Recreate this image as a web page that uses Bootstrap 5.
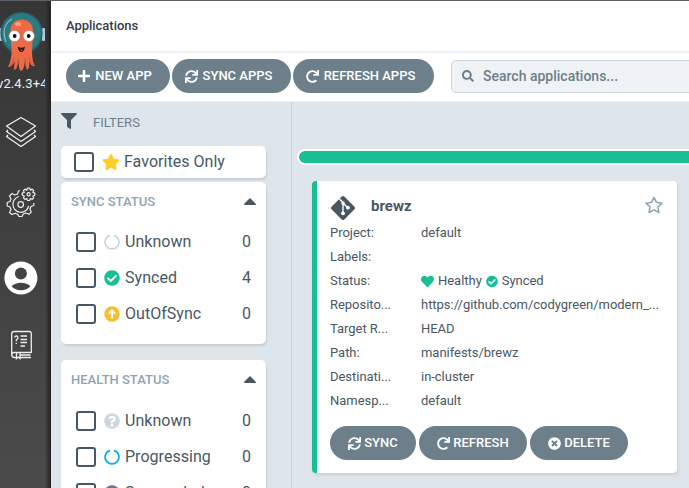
<!DOCTYPE html>
<html lang="en">
<head>
<meta charset="utf-8">
<title>Applications</title>
<link href="https://cdn.jsdelivr.net/npm/bootstrap@5.3.0/dist/css/bootstrap.min.css" rel="stylesheet">
<script src="https://cdn.jsdelivr.net/npm/bootstrap@5.3.0/dist/js/bootstrap.bundle.min.js"></script>
<style>
body{font-family:Roboto,"Liberation Sans",sans-serif;color:#495763;background:#dee6ec;height:488px;width:689px;overflow:hidden;border-top:1px solid #606067}
svg{display:block;flex:none;fill:currentColor}
.side{width:51px;flex:none;background:linear-gradient(90deg,transparent 45px,#272524 50px),linear-gradient(#363636,#4b4b4b);color:#f0f0f0;overflow:hidden}
.ver{font-size:13px;line-height:16px;width:45px;margin-top:1px;white-space:nowrap;overflow:hidden;letter-spacing:.1px;text-indent:-3px}
.i-layers{margin-top:24px}.i-gears{margin-top:39px}.i-user{margin-top:43px}.i-book{margin-top:34px}
.top-title{height:50px;font-size:13px;letter-spacing:-.03px;font-weight:500;color:#363c4a;padding-left:15px}
.tools{height:51px;border-top:2px solid #eef2f5;border-bottom:1px solid #eef2f5;padding:0 0 2px 15px;gap:2px}
.argo{background:#6d7f8b;color:#fff;height:34px;border-radius:17px;font-size:13px;font-weight:500;line-height:34px;white-space:nowrap;flex:none}
.tools .argo{padding:0 6px 0 0;gap:5px}
.acts .argo{gap:3px;padding:0}
.w-new{width:104px}.w-syncs{width:119px}.w-refs{width:141px}.w-sync{width:86px}.w-ref{width:108px}.w-del{width:98px}
.search{margin-left:15px;height:33px;width:300px;flex:none;background:#eff3f6;border:1px solid #ccd6dd;border-radius:5px;color:#6d7f8b;font-size:14px;font-weight:500;padding-left:10px;gap:9px}
.filters{width:241px;flex:none;border-right:1px solid #ccd3d8;padding:0 25px 0 10px}
.f-head{height:41px;font-size:13px;color:#6d7f8b;gap:16px}
.f-head svg{margin-top:-3px;color:#495763}
.panel{background:#fff;border-radius:5px;box-shadow:1px 2px 2px rgba(0,0,0,.1)}
.p-sync{height:162px}.p-health{height:220px}
.fav{height:32px;padding-left:13px;margin:3px 0 4px}
.p-head{height:38px;font-size:13px;font-weight:500;color:#8fa4b1;padding:1px 10px 0;margin-bottom:4px}
.p-head svg{color:#495763}
.p-health .p-head{margin-bottom:5px}
.opt{height:36px;padding:0 15px}
.opt,.fav{font-size:16px;letter-spacing:.03px}
.box{width:20px;height:20px;border:2px solid #495763;border-radius:3px;margin-right:8px;flex:none}
.opt svg,.fav svg{margin-right:5px}
.health-bar{height:16px;margin-left:5px;margin-top:47px;border:2px solid #fff;border-right:0;border-radius:8px 0 0 8px;background:#18be94;width:400px}
.app{width:365px;height:292px;margin:16px 0 0 20px;background:#fff;border-radius:4px;border-left:5px solid #18be94;padding:14px 18px 12px 13px;box-shadow:1px 2px 3px rgba(0,0,0,.1)}
.app-t{height:26px;font-size:15px}
.app-name{margin:-3px 0 0 15px}
.fav-star{fill:none;stroke:#8fa4b1;stroke-width:48;stroke-linejoin:round;margin:-7px -5px 0 0}
.line{height:24px;font-size:13px;line-height:24px;letter-spacing:-.03px}
.k{width:62px;margin-right:29px;flex:none}
.acts{gap:3px;margin-top:13px}
</style>
</head>
<body class="d-flex">
<svg width="0" height="0" class="position-absolute">
<symbol id="sync" viewBox="0 0 512 512"><path d="M440.65 12.57l4 82.77A247.16 247.16 0 0 0 255.83 8C134.73 8 33.91 94.92 12.29 209.82A12 12 0 0 0 24.09 224h49.05a12 12 0 0 0 11.67-9.26 175.91 175.91 0 0 1 317-56.94l-101.46-4.86a12 12 0 0 0-12.57 12v47.41a12 12 0 0 0 12 12H500a12 12 0 0 0 12-12V12a12 12 0 0 0-12-12h-47.37a12 12 0 0 0-11.98 12.57zM255.83 432a175.61 175.61 0 0 1-146-77.8l101.8 4.87a12 12 0 0 0 12.57-12v-47.4a12 12 0 0 0-12-12H12a12 12 0 0 0-12 12V500a12 12 0 0 0 12 12h47.35a12 12 0 0 0 12-12.6l-4.15-82.57A247.17 247.17 0 0 0 255.83 504c121.11 0 221.93-86.92 243.55-201.82a12 12 0 0 0-11.8-14.18h-49.05a12 12 0 0 0-11.67 9.26A175.86 175.86 0 0 1 255.83 432z"/></symbol>
<symbol id="redo" viewBox="0 0 512 512"><path d="M500.33 0h-47.41a12 12 0 0 0-12 12.57l4 82.76A247.42 247.42 0 0 0 256 8C119.34 8 7.9 119.53 8 256.19 8.1 393.07 119.1 504 256 504a247.1 247.1 0 0 0 166.18-63.91 12 12 0 0 0 .48-17.43l-34-34a12 12 0 0 0-16.38-.55A176 176 0 1 1 402.1 157.8l-101.53-4.87a12 12 0 0 0-12.57 12v47.41a12 12 0 0 0 12 12h200.33a12 12 0 0 0 12-12V12a12 12 0 0 0-12-12z"/></symbol>
<symbol id="check" viewBox="0 0 512 512"><path d="M504 256c0 136.967-111.033 248-248 248S8 392.967 8 256 119.033 8 256 8s248 111.033 248 248zM227.314 387.314l184-184c6.248-6.248 6.248-16.379 0-22.627l-22.627-22.627c-6.248-6.249-16.379-6.249-22.628 0L216 308.118l-70.059-70.059c-6.248-6.248-16.379-6.248-22.628 0l-22.627 22.627c-6.248 6.248-6.248 16.379 0 22.627l104 104c6.249 6.249 16.379 6.249 22.628.001z"/></symbol>
<symbol id="star" viewBox="0 0 576 512"><path d="M259.3 17.8L194 150.2 47.9 171.5c-26.2 3.8-36.7 36.1-17.7 54.6l105.7 103-25 145.5c-4.5 26.3 23.2 46 46.4 33.7L288 439.6l130.7 68.7c23.2 12.2 50.9-7.4 46.4-33.7l-25-145.5 105.7-103c19-18.5 8.5-50.8-17.7-54.6L382 150.2 316.7 17.8c-11.7-23.6-45.6-23.9-57.4 0z"/></symbol>
<symbol id="ring" viewBox="0 0 16 16"><path d="M10 1.4A6.9 6.9 0 1 1 6 1.4" fill="none" stroke="currentColor" stroke-width="1.7"/></symbol>
<symbol id="caret" viewBox="0 0 12 7"><path d="M6 0L12 6Q12 7 11 7H1Q0 7 0 6Z"/></symbol>
</svg>

<nav class="side d-flex flex-column h-100">
  <svg width="45" height="64" viewBox="0 0 45 64" style="margin-top:10px">
    <rect x="-1" y="17" width="3" height="13" rx="1" fill="#a9c8d9"/><rect x="42" y="17" width="3" height="13" rx="1" fill="#a9c8d9"/>
    <circle cx="21.5" cy="22" r="20.3" fill="#2a7b7f" stroke="#335f70" stroke-width="1.6"/>
    <path d="M6 31C2 20 5 12 12 8" fill="none" stroke="#80b8b4" stroke-width="1.4"/>
    <path d="M10.500 20C10.500 4.700 33 4.700 33 20L32 39C32 47 33 52 35 55Q31 56 29 50Q30 58 27 59Q25 54 25 49Q24 60 21 60Q18 58 19 49Q17 59 14 59Q14 54 15 50Q12 56 8 56Q12 48 11.500 39Z" fill="#ec6b46"/>
    <path d="M14 46q-1 7-4 9M18 47q0 7-2 11M25 47q0 8 2 11M29 46q1 7 4 8" fill="none" stroke="#c94f36" stroke-width=".8"/>
    <ellipse cx="18" cy="13" rx="3" ry="2" fill="#f5a080"/>
    <circle cx="14.5" cy="25" r="5.7" fill="#fff" stroke="#d9573a" stroke-width=".6"/><circle cx="28.8" cy="25" r="5.7" fill="#fff" stroke="#d9573a" stroke-width=".6"/>
    <circle cx="14.7" cy="25" r="1.9" fill="#111"/><circle cx="28.7" cy="25" r="1.9" fill="#111"/>
    <path d="M17.7 35.5Q21.5 38 25 35.5Q24 41 21.3 41T17.7 35.5Z" fill="#241a1a"/><path d="M20 39q1.5-1 3 0l-1.5 1.6Z" fill="#e33"/>
  </svg>
  <div class="ver">v2.4.3+4</div>
  <svg class="i-layers" width="42" height="32" viewBox="0 0 42 32" style="fill:none;stroke:#f2f2f2;stroke-width:1.2;stroke-linejoin:round"><path d="M21 1.5L35.5 10 21 20.5 6.5 10ZM8 14L6.5 15.500 21 25.5 35.5 15.5 34 14M8 19L6.5 20.5 21 30.5 35.5 20.5 34 19"/></svg>
  <svg class="i-gears" width="42" height="30" viewBox="0 0 42 30" style="fill:none;stroke:#eee;stroke-width:1.2;stroke-linejoin:round">
    <path d="M20 3.5L18.5 4 17.5 7 15 8 12 6.5 9.5 9 11 12 10 14.5 7.2 15.5V19L10 20 11 22.5 9.5 25.5 12 27.5 15 26.3 17.5 27.2 19 29.5H22L23.3 27 26 26 29 27.3 31.2 25 30 22 31 19.5 33.8 18.5V16"/>
    <path d="M19 9.5A8 8 0 1 0 28.7 19"/><circle cx="20.7" cy="17.5" r="2.8"/>
    <path d="M27.2 1.5h2.2l.6 2 1.9-1 1.5 1.5-.9 1.8 2 .7v2.2l-2 .7.9 1.9-1.5 1.5-1.9-.9-.6 2h-2.2l-.7-2-1.9.9-1.5-1.5.9-1.9-2-.7V6.5l2-.7-.9-1.8L24.6 2.5l1.9 1Z" transform="translate(.3 -.4)"/><circle cx="28.6" cy="7.3" r="1.6"/>
  </svg>
  <svg class="i-user" width="42" height="36" viewBox="0 0 42 36"><circle cx="20.9" cy="18" r="16.5" fill="#fff"/><circle cx="20.9" cy="13.5" r="6" fill="#434343"/><path d="M11.5 26.2C15.5 21.5 26.5 21.5 30.4 26.2C26 31.5 16 31.5 11.5 26.2Z" fill="#434343"/></svg>
  <svg class="i-book" width="42" height="30" viewBox="0 0 42 30" style="fill:none;stroke:#eee;stroke-width:1.3"><path d="M31.3 23V3.5Q31.3 1.5 29.3 1.5H14Q11.7 1.5 11.7 4V24.5Q11.7 27.5 14.5 27.5H16M31.3 22.5H14Q12 22.5 12 24.5M20 27.5H31M20 25H30.5M16.5 23V28.5L18.2 27 20 28.5V23"/><path d="M14.7 7.5Q15 5.8 16.6 6T17.8 8.5L16.3 10V11.2M16.3 12.7V14"/><path d="M20.5 6H27M20.5 9.5H27M20.5 12.5H27M20.5 16H25"/></svg>
</nav>

<main class="flex-grow-1 d-flex flex-column h-100 overflow-hidden">
  <header class="bg-white flex-shrink-0">
    <div class="top-title d-flex align-items-center">Applications</div>
    <div class="tools d-flex align-items-center">
      <button class="btn argo w-new d-flex align-items-center justify-content-center"><svg width="12" height="14" viewBox="0 0 448 512"><path d="M416 208H272V64c0-17.67-14.33-32-32-32h-32c-17.67 0-32 14.33-32 32v144H32c-17.67 0-32 14.33-32 32v32c0 17.67 14.33 32 32 32h144v144c0 17.67 14.33 32 32 32h32c17.67 0 32-14.33 32-32V304h144c17.67 0 32-14.33 32-32v-32c0-17.67-14.33-32-32-32z"/></svg>NEW APP</button>
      <button class="btn argo w-syncs d-flex align-items-center justify-content-center"><svg width="13" height="13"><use href="#sync"/></svg>SYNC APPS</button>
      <button class="btn argo w-refs d-flex align-items-center justify-content-center"><svg width="13" height="13"><use href="#redo"/></svg>REFRESH APPS</button>
      <div class="search d-flex align-items-center"><svg width="12" height="12" viewBox="0 0 512 512"><path d="M505 442.7L405.3 343c-4.5-4.5-10.6-7-17-7H372c27.6-35.3 44-79.7 44-128C416 93.1 322.9 0 208 0S0 93.1 0 208s93.1 208 208 208c48.3 0 92.7-16.4 128-44v16.3c0 6.4 2.5 12.5 7 17l99.7 99.7c9.4 9.4 24.6 9.4 33.9 0l28.3-28.3c9.4-9.4 9.4-24.6.1-34zM208 336c-70.7 0-128-57.2-128-128 0-70.7 57.2-128 128-128 70.7 0 128 57.2 128 128 0 70.7-57.2 128-128 128z"/></svg>Search applications...</div>
    </div>
  </header>
  <div class="d-flex flex-grow-1" style="min-height:0">
    <aside class="filters">
      <div class="f-head d-flex align-items-center"><svg width="16" height="16" viewBox="0 0 512 512"><path d="M487.976 0H24.028C2.71 0-8.047 25.866 7.058 40.971L192 225.941V432c0 7.831 3.821 15.17 10.237 19.662l80 55.98C298.02 518.69 320 507.493 320 487.98V225.941l184.947-184.97C520.021 25.896 509.338 0 487.976 0z"/></svg>FILTERS</div>
      <div class="panel fav d-flex align-items-center"><span class="box"></span><svg width="18" height="16" color="#ffce25"><use href="#star"/></svg><span style="margin-left:-1px">Favorites Only</span></div>
      <section class="panel p-sync">
        <div class="p-head d-flex align-items-center justify-content-between">SYNC STATUS<svg width="12" height="7"><use href="#caret"/></svg></div>
        <div class="opt d-flex align-items-center"><span class="box"></span><svg width="16" height="16" color="#ccd6dd"><use href="#ring"/></svg>Unknown<span class="ms-auto">0</span></div>
        <div class="opt d-flex align-items-center"><span class="box"></span><svg width="16" height="16" color="#18be94"><use href="#check"/></svg>Synced<span class="ms-auto">4</span></div>
        <div class="opt d-flex align-items-center"><span class="box"></span><svg width="16" height="16" viewBox="0 0 512 512" color="#f4c030"><circle cx="256" cy="256" r="248"/><path d="M256 390V150M155 245L256 145 357 245" fill="none" stroke="#fff" stroke-width="66"/></svg>OutOfSync<span class="ms-auto">0</span></div>
      </section>
      <section class="panel p-health mt-3">
        <div class="p-head d-flex align-items-center justify-content-between">HEALTH STATUS<svg width="12" height="7"><use href="#caret"/></svg></div>
        <div class="opt d-flex align-items-center"><span class="box"></span><svg width="16" height="16" viewBox="0 0 512 512" color="#ccd6dd"><path d="M504 256c0 136.997-111.043 248-248 248S8 392.997 8 256C8 119.083 119.043 8 256 8s248 111.083 248 248zM262.655 90c-54.497 0-89.255 22.957-116.549 63.758-3.536 5.286-2.353 12.415 2.715 16.258l34.699 26.31c5.205 3.947 12.621 3.008 16.665-2.122 17.864-22.658 30.113-35.797 57.303-35.797 20.429 0 45.698 13.148 45.698 32.958 0 14.976-12.363 22.667-32.534 33.976C247.128 238.528 216 254.941 216 296v4c0 6.627 5.373 12 12 12h56c6.627 0 12-5.373 12-12v-1.333c0-28.462 83.186-29.647 83.186-106.667 0-58.002-60.165-102-116.531-102zM256 338c-25.365 0-46 20.635-46 46 0 25.364 20.635 46 46 46s46-20.636 46-46c0-25.365-20.635-46-46-46z"/></svg>Unknown<span class="ms-auto">0</span></div>
        <div class="opt d-flex align-items-center"><span class="box"></span><svg width="16" height="16" color="#0dadea"><use href="#ring"/></svg>Progressing<span class="ms-auto">0</span></div>
        <div class="opt d-flex align-items-center"><span class="box"></span><svg width="16" height="16" viewBox="0 0 16 16" color="#766f94"><circle cx="8" cy="8" r="7.75"/><path d="M5 5h2v6H5zM9 5h2v6H9z" fill="#fff"/></svg>Suspended<span class="ms-auto">0</span></div>
      </section>
    </aside>
    <div class="flex-grow-1 overflow-hidden">
      <div class="health-bar"></div>
      <article class="app">
        <div class="app-t d-flex align-items-center fw-bold">
          <svg width="26" height="26" viewBox="0 0 26 26"><path d="M11.7 1.5Q13 .3 14.3 1.5L24.5 11.7Q25.7 13 24.5 14.3L14.3 24.5Q13 25.7 11.7 24.5L1.5 14.3Q.3 13 1.5 11.7Z"/><path d="M9.3 3.8L13 7.5V18M13 8L18 13" fill="none" stroke="#fff" stroke-width="1.4"/><circle cx="13" cy="8" r="1.8" fill="#fff"/><circle cx="13" cy="18.3" r="1.9" fill="#fff"/><circle cx="17.9" cy="12.7" r="1.9" fill="#fff"/></svg>
          <span class="app-name">brewz</span>
          <svg class="fav-star ms-auto" width="20" height="18" viewBox="-24 -24 624 560"><path d="M288 18L364 173 536 198 412 319 441 490 288 410 135 490 164 319 40 198 212 173Z"/></svg>
        </div>
        <div class="line d-flex"><span class="k">Project:</span><span>default</span></div>
        <div class="line d-flex"><span class="k">Labels:</span></div>
        <div class="line d-flex"><span class="k">Status:</span><span class="d-flex align-items-center"><svg width="13" height="13" viewBox="0 0 512 512" color="#18be94"><path d="M462.3 62.6C407.5 15.9 326 24.3 275.7 76.2L256 96.5l-19.7-20.3C186.1 24.3 104.5 15.9 49.7 62.6c-62.8 53.6-66.1 149.8-9.9 207.9l193.5 199.8c12.5 12.9 32.8 12.9 45.3 0l193.5-199.8c56.3-58.1 53-154.3-9.8-207.9z"/></svg><span class="ms-1 me-1">Healthy</span><svg width="12" height="13" color="#18be94"><use href="#check"/></svg><span class="ms-1">Synced</span></span></div>
        <div class="line d-flex"><span class="k">Reposito...</span><span class="text-nowrap">https://github.com/codygreen/modern_...</span></div>
        <div class="line d-flex"><span class="k">Target R...</span><span>HEAD</span></div>
        <div class="line d-flex"><span class="k">Path:</span><span>manifests/brewz</span></div>
        <div class="line d-flex"><span class="k">Destinati...</span><span>in-cluster</span></div>
        <div class="line d-flex"><span class="k">Namesp...</span><span>default</span></div>
        <div class="acts d-flex">
          <button class="btn argo w-sync d-flex align-items-center justify-content-center"><svg width="13" height="13"><use href="#sync"/></svg>SYNC</button>
          <button class="btn argo w-ref d-flex align-items-center justify-content-center"><svg width="13" height="13"><use href="#redo"/></svg>REFRESH</button>
          <button class="btn argo w-del d-flex align-items-center justify-content-center"><svg width="13" height="13" viewBox="0 0 512 512"><path d="M256 8C119 8 8 119 8 256s111 248 248 248 248-111 248-248S393 8 256 8zm121.6 313.1c4.7 4.7 4.7 12.3 0 17L338 377.6c-4.7 4.7-12.3 4.7-17 0L256 312l-65.1 65.6c-4.7 4.7-12.3 4.7-17 0L134.4 338c-4.7-4.7-4.7-12.3 0-17l65.6-65-65.6-65.1c-4.7-4.7-4.7-12.3 0-17l39.6-39.6c4.7-4.7 12.3-4.7 17 0l65 65.7 65.1-65.6c4.7-4.7 12.3-4.7 17 0l39.6 39.6c4.7 4.7 4.7 12.3 0 17L312 256l65.6 65.1z"/></svg>DELETE</button>
        </div>
      </article>
    </div>
  </div>
</main>
</body>
</html>
